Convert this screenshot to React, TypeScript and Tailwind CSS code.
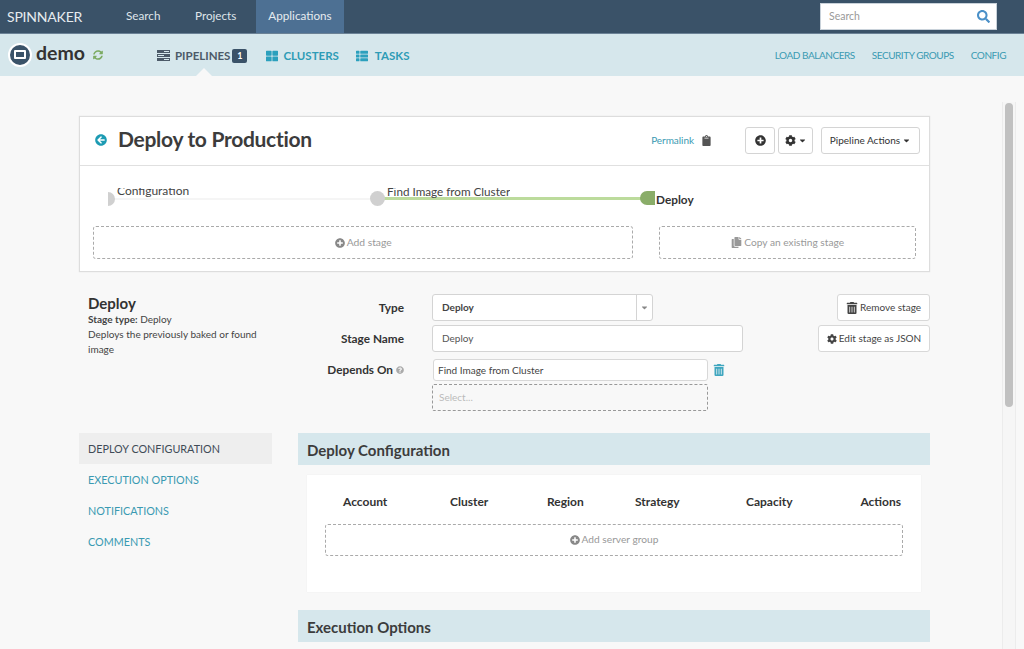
import { ReactNode } from "react";
import {
  FaArrowCircleLeft,
  FaCaretDown,
  FaClipboard,
  FaCog,
  FaCopy,
  FaPlusCircle,
  FaQuestionCircle,
  FaSearch,
  FaSyncAlt,
  FaThLarge,
  FaThList,
  FaTrashAlt,
} from "react-icons/fa";

const dashed = "border border-dashed border-[#aaaaaa] rounded-[3px]";

function PipelinesIcon() {
  return (
    <svg width="13" height="11" viewBox="0 0 13 11" fill="#4c5a68">
      <rect x="0" y="0" width="13" height="3" />
      <rect x="0" y="4" width="13" height="3" />
      <rect x="0" y="8" width="13" height="3" />
      <rect x="7" y="1" width="5" height="1" fill="#d6e7ec" />
      <rect x="1" y="5" width="6" height="1" fill="#d6e7ec" />
      <rect x="7" y="9" width="5" height="1" fill="#d6e7ec" />
    </svg>
  );
}

function TopBar() {
  return (
    <div className="h-[34px] bg-[#3a5268] border-b border-[#6b8296] flex items-center text-white shrink-0">
      <div className="w-[126px] pl-[7px] text-[14px] tracking-[-0.2px] text-[#e6ebef]">SPINNAKER</div>
      <div className="w-[69px] pb-[2px] text-[11.7px] text-[#dfe5ea]">Search</div>
      <div className="w-[61px] pb-[2px] text-[11.7px] text-[#dfe5ea]">Projects</div>
      <div className="h-full w-[88px] pb-[2px] bg-[#4d7093] flex items-center justify-center text-[11.7px] text-[#e6ebef]">
        Applications
      </div>
      <div className="ml-auto mr-[27px] w-[177px] h-[27px] bg-white border border-[#c9d2da] flex items-center justify-between pl-[8px] pr-[6px]">
        <span className="text-[10.5px] text-[#999999]">Search</span>
        <FaSearch className="text-[#4a90c8] text-[13px]" />
      </div>
    </div>
  );
}

function SubNav() {
  return (
    <div className="relative h-[42px] bg-[#d6e7ec] flex items-center shrink-0">
      <div className="pl-[8px] flex items-center w-[157px] -mt-[1px]">
        <div className="w-[24px] h-[24px] rounded-full bg-[#3a5268] border-2 border-white flex items-center justify-center">
          <div className="w-[12px] h-[9px] rounded-[1px] border-2 border-white" />
        </div>
        <span className="ml-[4px] text-[19.5px] font-bold text-[#333333] leading-none -mt-[4px]">demo</span>
        <FaSyncAlt className="ml-[8px] text-[10px] text-[#7cab62]" />
      </div>
      <div className="flex items-center font-bold text-[11.5px] mt-[1px]">
        <PipelinesIcon />
        <span className="ml-[5px] text-[#4c5a68]">PIPELINES</span>
        <span className="ml-[2px] w-[15px] h-[14px] rounded-[2px] bg-[#3a5268] text-white text-[9px] flex items-center justify-center">1</span>
        <FaThLarge className="ml-[19px] text-[#2ba0bd] text-[12px]" />
        <span className="ml-[5px] text-[#2e9cb6]">CLUSTERS</span>
        <FaThList className="ml-[17px] text-[#2ba0bd] text-[12px]" />
        <span className="ml-[7px] text-[#2e9cb6]">TASKS</span>
      </div>
      <div className="ml-auto mr-[18px] flex gap-[17px] text-[10px] tracking-[-0.45px] text-[#3a9ab2]">
        <span>LOAD BALANCERS</span>
        <span>SECURITY GROUPS</span>
        <span>CONFIG</span>
      </div>
      <div className="absolute left-[196px] bottom-0 w-0 h-0 border-x-[8px] border-x-transparent border-b-[8px] border-b-[#f8f8f8]" />
    </div>
  );
}

function HeaderButton({ children, className }: { children: ReactNode; className: string }) {
  return (
    <div className={`h-[27px] bg-white border border-[#d4d4d4] rounded-[3px] flex items-center justify-center text-[#333333] ${className}`}>
      {children}
    </div>
  );
}

function PipelineGraph() {
  return (
    <div className="relative h-[60px]">
      <div className="absolute left-[28px] top-[32px] w-[264px] h-[2px] bg-[#f5f5f5]" />
      <div className="absolute left-[300px] top-[31px] w-[266px] h-[3px] bg-[#bcdb9c]" />
      <div className="absolute left-[28px] top-[26px] w-[7px] h-[14px] rounded-r-full bg-[#d0d0d0]" />
      <div className="absolute left-[290px] top-[25px] w-[15px] h-[15px] rounded-full bg-[#d0d0d0]" />
      <div className="absolute left-[560px] top-[25px] w-[15px] h-[14px] rounded-l-full bg-[#8aad69]" />
      <div className="absolute left-[37px] top-[22px] h-[10px] overflow-hidden text-[12px] leading-[14px] text-[#444444]">
        <div className="-mt-[4px]">Configuration</div>
      </div>
      <div className="absolute left-[307px] top-[22px] h-[10px] overflow-hidden text-[11.7px] leading-[14px] text-[#444444]">
        <div className="-mt-[4px]">Find Image from Cluster</div>
      </div>
      <div className="absolute left-[576px] top-[27px] text-[11.8px] leading-[14px] font-bold text-[#333333]">Deploy</div>
    </div>
  );
}

function PipelineCard() {
  return (
    <div className="bg-white border border-[#dddddd] shadow-[0_0_1px_#dddddd]">
      <div className="h-[49px] pb-[2px] border-b border-[#e0e0e0] flex items-center pl-[15px] pr-[9px]">
        <FaArrowCircleLeft className="text-[#1d9bb3] text-[12px]" />
        <span className="ml-[11px] -mt-[3px] text-[21px] font-bold text-[#3c3c3c] tracking-[-0.3px]">Deploy to Production</span>
        <span className="ml-auto text-[10px] tracking-[-0.05px] text-[#3a9ab2]">Permalink</span>
        <FaClipboard className="ml-[7px] text-[#555555] text-[11px]" />
        <HeaderButton className="ml-[33px] w-[30px]">
          <FaPlusCircle className="text-[11px]" />
        </HeaderButton>
        <HeaderButton className="ml-[3px] w-[35px] gap-[2px]">
          <FaCog className="text-[11px]" />
          <FaCaretDown className="text-[9px]" />
        </HeaderButton>
        <HeaderButton className="ml-[8px] w-[99px] text-[10px] gap-[2px]">
          Pipeline Actions
          <FaCaretDown className="text-[9px]" />
        </HeaderButton>
      </div>
      <PipelineGraph />
      <div className="flex px-[13px] gap-[26px] pb-[12px]">
        <div className={`${dashed} w-[541px] h-[33px] flex items-center justify-center gap-[2px] text-[10.3px] text-[#999999]`}>
          <FaPlusCircle className="text-[10px] text-[#888888]" />
          Add stage
        </div>
        <div className={`${dashed} w-[257px] h-[33px] flex items-center justify-center gap-[2px] text-[10.2px] text-[#999999]`}>
          <FaCopy className="text-[11px] text-[#999999]" />
          Copy an existing stage
        </div>
      </div>
    </div>
  );
}

function FieldRow({ label, children, className }: { label: ReactNode; children: ReactNode; className: string }) {
  return (
    <div className={`flex ${className}`}>
      <div className="w-[106px] shrink-0 text-right text-[11.8px] font-bold text-[#333333] flex items-center justify-end gap-[3px]">{label}</div>
      <div className="ml-[28px]">{children}</div>
    </div>
  );
}

function StageForm() {
  return (
    <div className="flex mt-[22px] h-[139px]">
      <div className="w-[190px] pl-[9px] text-[10px] leading-[15px] text-[#444444]">
        <div className="text-[15px] leading-[18px] font-bold text-[#333333]">Deploy</div>
        <div><b>Stage type:</b> Deploy</div>
        <div>Deploys the previously baked or found image</div>
      </div>
      <div className="ml-[29px] w-[445px]">
        <FieldRow label="Type" className="h-[27px]">
          <div className="w-[221px] h-[27px] bg-white border border-[#d4d4d4] rounded-[3px] flex items-center text-[10px] font-bold text-[#444444]">
            <span className="pl-[9px] flex-1">Deploy</span>
            <div className="w-[16px] h-full border-l border-[#d4d4d4] flex items-center justify-center">
              <FaCaretDown className="text-[9px] text-[#888888]" />
            </div>
          </div>
        </FieldRow>
        <FieldRow label="Stage Name" className="h-[27px] mt-[4px]">
          <div className="w-[311px] h-[27px] bg-white border border-[#d4d4d4] rounded-[3px] flex items-center pl-[9px] text-[10px] text-[#555555]">Deploy</div>
        </FieldRow>
        <FieldRow label={<>Depends On <FaQuestionCircle className="text-[8px] text-[#aaaaaa]" /></>} className="h-[22px] mt-[7px]">
          <div className="flex items-center">
            <div className="ml-[1px] w-[275px] h-[22px] bg-white border border-[#d8d8d8] rounded-[3px] flex items-center pl-[4px] text-[10px] text-[#444444]">Find Image from Cluster</div>
            <FaTrashAlt className="ml-[5px] text-[12px] text-[#3fa6bf]" />
          </div>
        </FieldRow>
        <div className="ml-[134px] mt-[3px]">
          <div className="w-[276px] h-[27px] border border-dashed border-[#999999] rounded-[2px] flex items-center pl-[6px] text-[10px] text-[#bbbbbb]">Select...</div>
        </div>
      </div>
      <div className="flex-1 flex flex-col items-end gap-[4px]">
        <div className="w-[93px] h-[27px] bg-white border border-[#d8d8d8] rounded-[3px] flex items-center justify-center gap-[2px] text-[10px] text-[#444444]">
          <FaTrashAlt className="text-[12px]" />
          Remove stage
        </div>
        <div className="w-[112px] h-[27px] bg-white border border-[#d8d8d8] rounded-[3px] flex items-center justify-center gap-[2px] text-[10px] text-[#444444]">
          <FaCog className="text-[10px]" />
          Edit stage as JSON
        </div>
      </div>
    </div>
  );
}

function SideMenu() {
  return (
    <div className="w-[193px] text-[10.8px] text-[#3a9ab2]">
      <div className="h-[31px] pt-[2px] bg-[#eeeeee] pl-[9px] flex items-center text-[#3f4b57]">DEPLOY CONFIGURATION</div>
      <div className="h-[31px] pt-[2px] pl-[9px] flex items-center">EXECUTION OPTIONS</div>
      <div className="h-[31px] pt-[2px] pl-[9px] flex items-center">NOTIFICATIONS</div>
      <div className="h-[31px] pt-[2px] pl-[9px] flex items-center">COMMENTS</div>
    </div>
  );
}

function SectionTitle({ children }: { children: ReactNode }) {
  return (
    <div className="h-[32px] pt-[2px] bg-[#d6e7ec] pl-[9px] flex items-center text-[15px] font-bold text-[#3c3c3c]">{children}</div>
  );
}

function DeployPanel() {
  return (
    <div className="flex-1">
      <SectionTitle>Deploy Configuration</SectionTitle>
      <div className="ml-[9px] mr-[9px] mt-[10px] h-[117px] bg-white shadow-[0_0_1px_#e4e4e4] px-[18px]">
        <div className="relative h-[49px] text-[12px] font-bold text-[#333333]">
          <span className="absolute left-[18px] top-[18px]">Account</span>
          <span className="absolute left-[125px] top-[18px]">Cluster</span>
          <span className="absolute left-[222px] top-[18px]">Region</span>
          <span className="absolute left-[310px] top-[18px]">Strategy</span>
          <span className="absolute left-[421px] top-[18px]">Capacity</span>
          <span className="absolute right-[2px] top-[18px]">Actions</span>
        </div>
        <div className={`${dashed} h-[32px] flex items-center justify-center gap-[2px] text-[10.2px] text-[#999999]`}>
          <FaPlusCircle className="text-[10px] text-[#888888]" />
          Add server group
        </div>
      </div>
      <div className="mt-[18px]">
        <SectionTitle>Execution Options</SectionTitle>
      </div>
    </div>
  );
}

export default function App() {
  return (
    <div className="relative h-[649px] w-[1024px] overflow-hidden flex flex-col bg-[#f8f8f8] font-['Lato','Liberation_Sans',sans-serif]">
      <TopBar />
      <SubNav />
      <div className="pl-[79px] w-[930px] box-content pt-[40px]">
        <div className="w-[851px]">
          <PipelineCard />
          <StageForm />
          <div className="flex gap-[26px]">
            <SideMenu />
            <DeployPanel />
          </div>
        </div>
      </div>
      <div className="absolute left-[1002px] top-[102px] bottom-0 w-[14px] bg-[#f6f6f6] border-x border-[#ececec]">
        <div className="mx-auto mt-[1px] w-[8px] h-[304px] rounded-full bg-[#c1c1c1]" />
      </div>
    </div>
  );
}
